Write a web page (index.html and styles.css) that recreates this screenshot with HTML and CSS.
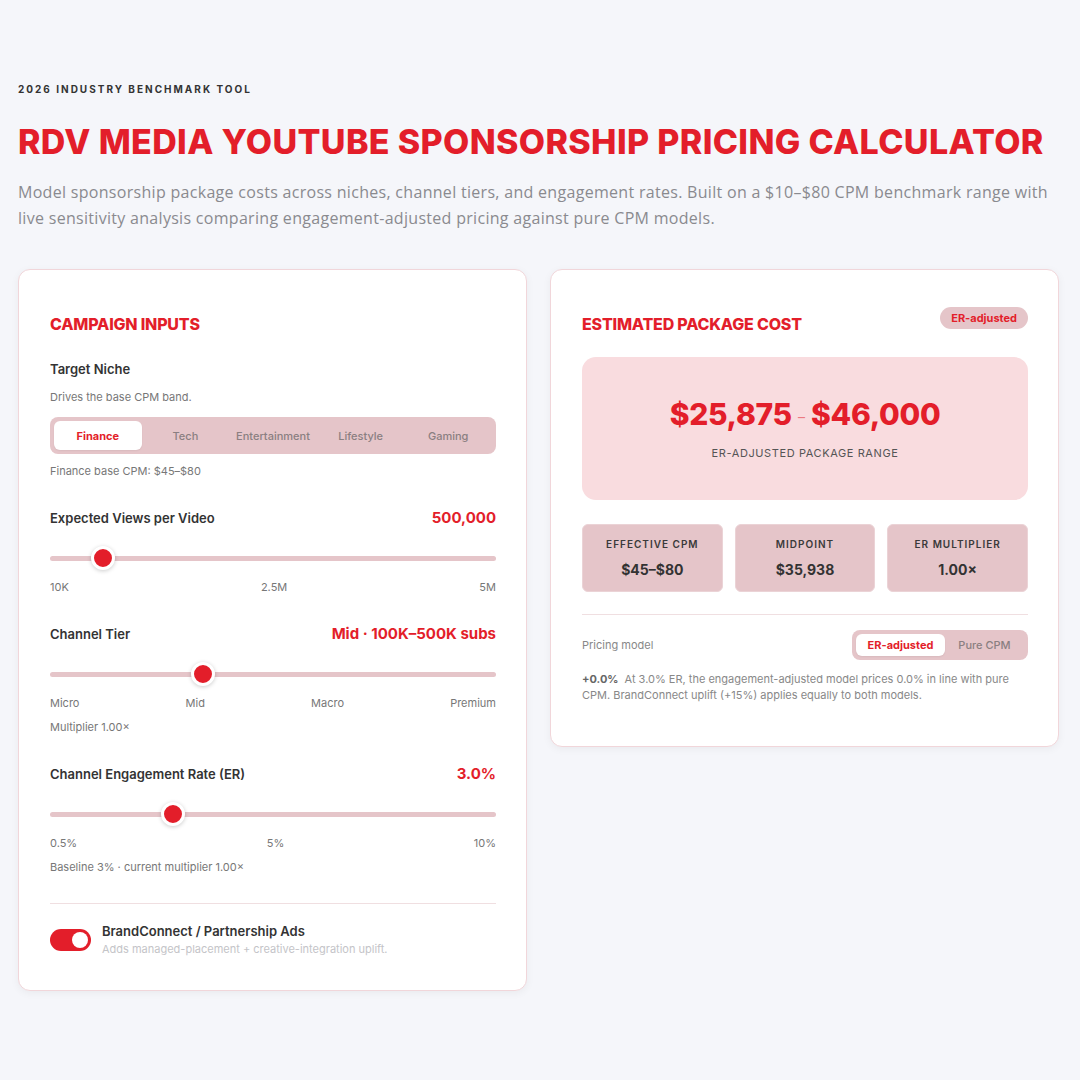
FILE: index.html
```html
<!doctype html>
<html>
<head>
<meta charset="utf-8">
<title>RDV Media YouTube Sponsorship Pricing Calculator</title>
<link rel="stylesheet" href="styles.css">
</head>
<body>
<main class="page">
	<header class="hero">
		<p class="eyebrow">2026 Industry Benchmark Tool</p>
		<h1 class="title">RDV Media YouTube Sponsorship Pricing Calculator</h1>
		<p class="lede">Model sponsorship package costs across niches, channel tiers, and engagement rates. Built on a $10–$80 CPM benchmark range with live sensitivity analysis comparing engagement-adjusted pricing against pure CPM models.</p>
	</header>

	<div class="grid">
		<section class="card inputs">
			<h2 class="card-title">Campaign Inputs</h2>

			<div class="field">
				<div class="label">Target Niche</div>
				<p class="help">Drives the base CPM band.</p>
				<div class="seg seg-niche">
					<button class="active">Finance</button>
					<button>Tech</button>
					<button>Entertainment</button>
					<button>Lifestyle</button>
					<button>Gaming</button>
				</div>
				<p class="note">Finance base CPM: $45–$80</p>
			</div>

			<div class="field">
				<div class="row">
					<span class="label">Expected Views per Video</span>
					<span class="value">500,000</span>
				</div>
				<input class="range" type="range" min="10000" max="5000000" value="500000">
				<div class="ticks"><span>10K</span><span>2.5M</span><span>5M</span></div>
			</div>

			<div class="field">
				<div class="row">
					<span class="label">Channel Tier</span>
					<span class="value">Mid · 100K–500K subs</span>
				</div>
				<input class="range" type="range" min="0" max="3" step="1" value="1">
				<div class="ticks"><span>Micro</span><span>Mid</span><span>Macro</span><span>Premium</span></div>
				<p class="note">Multiplier 1.00×</p>
			</div>

			<div class="field">
				<div class="row">
					<span class="label">Channel Engagement Rate (ER)</span>
					<span class="value">3.0%</span>
				</div>
				<input class="range" type="range" min="0.5" max="10" step="0.1" value="3">
				<div class="ticks"><span>0.5%</span><span>5%</span><span>10%</span></div>
				<p class="note">Baseline 3% · current multiplier 1.00×</p>
			</div>

			<div class="toggle-row">
				<span class="switch on"><span class="knob"></span></span>
				<div>
					<div class="toggle-title">BrandConnect / Partnership Ads</div>
					<div class="toggle-sub">Adds managed-placement + creative-integration uplift.</div>
				</div>
			</div>
		</section>

		<section class="card results">
			<div class="card-head">
				<h2 class="card-title">Estimated Package Cost</h2>
				<span class="badge">ER-adjusted</span>
			</div>

			<div class="price-box">
				<div class="price">$25,875 <span class="dash">–</span> $46,000</div>
				<div class="price-cap">ER-adjusted package range</div>
			</div>

			<div class="stats">
				<div class="stat"><div class="stat-label">Effective CPM</div><div class="stat-value">$45–$80</div></div>
				<div class="stat"><div class="stat-label">Midpoint</div><div class="stat-value">$35,938</div></div>
				<div class="stat"><div class="stat-label">ER Multiplier</div><div class="stat-value">1.00×</div></div>
			</div>

			<div class="model-row">
				<span class="model-label">Pricing model</span>
				<div class="seg seg-model">
					<button class="active">ER-adjusted</button>
					<button>Pure CPM</button>
				</div>
			</div>
			<p class="summary"><b class="delta">+0.0%</b>At 3.0% ER, the engagement-adjusted model prices 0.0% in line with pure CPM. BrandConnect uplift (+15%) applies equally to both models.</p>
		</section>
	</div>
</main>
</body>
</html>
```

FILE: styles.css
```css
*{
	margin:0;
	padding:0;
	box-sizing:border-box;
}
body{
	background:#f5f6fa;
	font-family:Inter,"Noto Sans",sans-serif;
	color:#333;
}
.page{
	padding:82px 21px 40px 18px;
}
.eyebrow{
	font-size:10px;
	font-weight:700;
	letter-spacing:2px;
	text-transform:uppercase;
	color:#333;
	line-height:14px;
}
.title{
	margin-top:25px;
	font-size:34px;
	line-height:42px;
	font-weight:800;
	letter-spacing:0.35px;
	text-transform:uppercase;
	color:#e31e2a;
}
.lede{
	margin-top:16px;
	font-size:16px;
	line-height:26px;
	color:#8a8a8f;
	font-family:"Open Sans","Noto Sans",sans-serif;
	letter-spacing:0.3px;
}
.grid{
	display:grid;
	grid-template-columns:1fr 1fr;
	gap:23px;
	margin-top:38px;
	align-items:start;
}
.card{
	background:#fff;
	border:1px solid #f1d6da;
	border-radius:12px;
	box-shadow:0 2px 8px rgba(0,0,0,.05);
	padding:44px 30px 34px 31px;
}
.card-title{
	font-size:16px;
	line-height:20px;
	font-weight:800;
	text-transform:uppercase;
	color:#e31e2a;
	letter-spacing:-0.2px;
}
.field{
	margin-top:30px;
}
.inputs .field:first-of-type{
	margin-top:26px;
}
.label{
	font-size:13px;
	font-weight:600;
	color:#333;
	line-height:18px;
}
.help{
	margin-top:12px;
	font-size:11px;
	color:#777;
	line-height:14px;
}
.note{
	margin-top:10px;
	font-size:11px;
	color:#777;
	line-height:14px;
}
.seg{
	display:flex;
	background:#e5c5c9;
	border-radius:8px;
	padding:4px;
}
.seg button{
	flex:1;
	border:0;
	background:none;
	font-family:Inter,"Noto Sans",sans-serif;
	font-size:11px;
	font-weight:500;
	color:#8a7f81;
	border-radius:6px;
	height:29px;
}
.seg button.active{
	background:#fff;
	color:#e31e2a;
	font-weight:700;
	box-shadow:0 1px 2px rgba(0,0,0,.06);
}
.seg-niche{
	margin-top:13px;
}
.row{
	display:flex;
	justify-content:space-between;
	align-items:baseline;
}
.value{
	font-size:15px;
	font-weight:700;
	color:#e31e2a;
}
.range{
	-webkit-appearance:none;
	appearance:none;
	display:block;
	width:100%;
	height:24px;
	margin-top:19px;
	background:none;
}
.range::-webkit-slider-runnable-track{
	height:5px;
	border-radius:3px;
	background:#e5c5c9;
}
.range::-webkit-slider-thumb{
	-webkit-appearance:none;
	width:24px;
	height:24px;
	margin-top:-10px;
	border-radius:50%;
	background:#e31e2a;
	border:3px solid #fff;
	box-shadow:0 1px 4px rgba(0,0,0,.2);
}
.ticks{
	display:flex;
	justify-content:space-between;
	margin-top:10px;
	font-size:11px;
	color:#777;
	line-height:14px;
}
.toggle-row{
	display:flex;
	gap:11px;
	align-items:flex-start;
	margin-top:29px;
	padding-top:19px;
	border-top:1px solid #f0dfe1;
}
.switch{
	width:41px;
	height:22px;
	border-radius:11px;
	background:#e31e2a;
	position:relative;
	flex:none;
	margin-top:6px;
}
.knob{
	position:absolute;
	top:3px;
	right:3px;
	width:16px;
	height:16px;
	border-radius:50%;
	background:#fff;
}
.toggle-title{
	font-size:13px;
	font-weight:600;
	line-height:16px;
	color:#333;
}
.toggle-sub{
	margin-top:3px;
	font-size:11px;
	color:#c4c4c8;
	line-height:14px;
}
.card-head{
	display:flex;
	justify-content:space-between;
	align-items:flex-start;
	height:20px;
}
.badge{
	background:#e5c5c9;
	color:#e31e2a;
	font-size:11px;
	font-weight:700;
	border-radius:12px;
	padding:4px 11px;
	line-height:14px;
	margin-top:-7px;
}
.price-box{
	margin-top:23px;
	background:#f9dcdf;
	border-radius:14px;
	height:143px;
	display:flex;
	flex-direction:column;
	align-items:center;
	justify-content:center;
}
.price{
	font-size:30px;
	font-weight:800;
	color:#e31e2a;
	line-height:34px;
	letter-spacing:-0.3px;
}
.dash{
	font-size:14px;
	font-weight:400;
	color:#ec7a82;
	vertical-align:middle;
}
.price-cap{
	margin-top:12px;
	font-size:11px;
	letter-spacing:.6px;
	text-transform:uppercase;
	color:#555;
	line-height:14px;
}
.stats{
	display:grid;
	grid-template-columns:repeat(3,1fr);
	gap:12px;
	margin-top:24px;
}
.stat{
	background:#e5c5c9;
	border:1px solid #ebd3d6;
	border-radius:6px;
	height:68px;
	display:flex;
	flex-direction:column;
	align-items:center;
	justify-content:center;
}
.stat-label{
	font-size:10px;
	font-weight:600;
	letter-spacing:1px;
	text-transform:uppercase;
	color:#3a3a3a;
	line-height:13px;
}
.stat-value{
	margin-top:10px;
	font-size:14px;
	font-weight:700;
	color:#333;
	line-height:17px;
}
.model-row{
	display:flex;
	justify-content:space-between;
	align-items:center;
	margin-top:22px;
	padding-top:15px;
	border-top:1px solid #f0dfe1;
}
.model-label{
	font-size:11px;
	color:#888;
}
.seg-model{
	width:176px;
	padding:4px;
}
.seg-model button{
	height:22px;
	flex:none;
}
.seg-model button.active{
	width:89px;
}
.seg-model button:last-child{
	flex:1;
}
.summary{
	margin-top:11px;
	font-size:11px;
	line-height:16px;
	color:#888;
}
.summary .delta{
	color:#666;
	margin-right:6px;
}
.results{
	padding-bottom:43px;
}
```
